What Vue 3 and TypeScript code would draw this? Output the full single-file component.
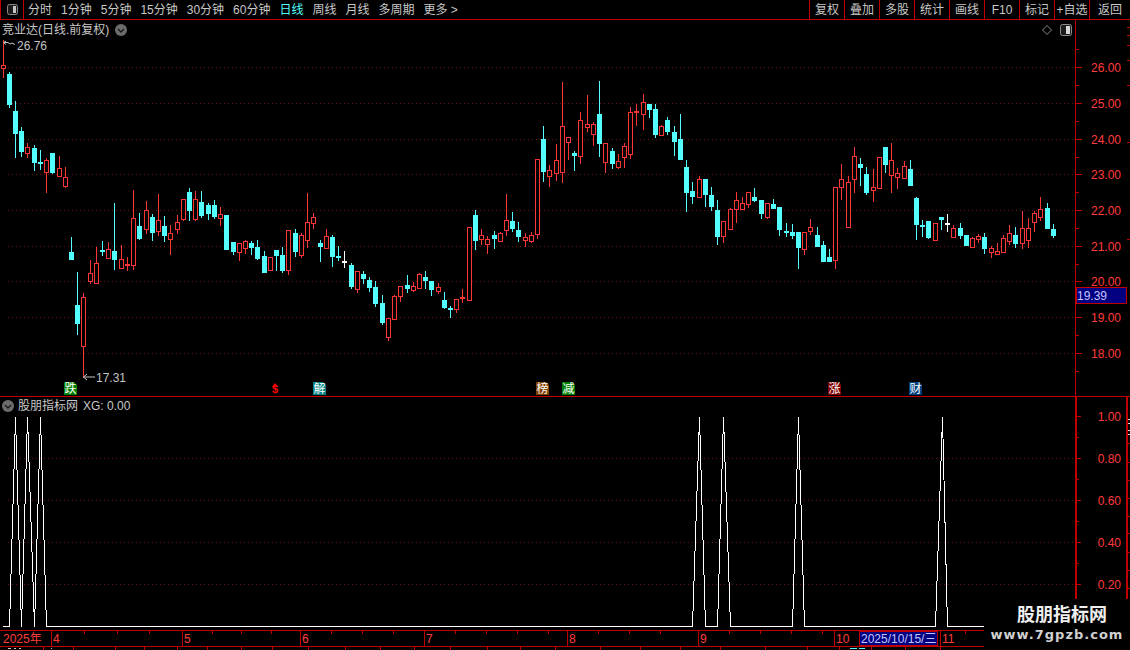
<script setup lang="ts">
type Candle = [number, number, number, number, number, number];

const RED = "#ff3636";
const CYAN = "#54ffff";
const WHITE = "#ffffff";

const tabs = ["分时", "1分钟", "5分钟", "15分钟", "30分钟", "60分钟", "日线", "周线", "月线", "多周期", "更多 >"];
const tools = ["复权", "叠加", "多股", "统计", "画线", "F10", "标记", "+自选", "返回"];

// x, high, bodyTop, bodyBottom, low, kind (0 up, 1 down, 2 flat) — in page pixels
const candles: Candle[] = [
  [3,40,65,68,77,0],[9,72,74,104,107,1],[15,101,111,133,157,1],[21,127,131,151,156,1],[27,143,147,153,157,0],
  [34,145,148,162,170,1],[40,150,162,163,169,1],[46,158,160,172,192,0],[52,153,153,172,173,1],[59,156,168,176,176,0],
  [65,167,177,186,187,0],[71,237,252,259,259,1],[77,272,305,323,334,1],[83,293,297,346,377,0],[90,260,273,281,283,0],
  [96,247,263,283,283,0],[102,241,250,251,255,1],[108,242,249,258,258,0],[114,203,251,259,269,1],[121,245,259,268,268,0],
  [127,257,264,265,270,0],[133,190,218,265,269,0],[139,213,226,238,239,1],[146,201,210,229,233,0],[152,214,217,232,240,1],
  [158,194,220,231,235,0],[164,216,226,235,241,1],[170,225,233,239,254,0],[177,215,222,229,233,0],[183,199,199,219,220,0],
  [189,188,192,210,220,1],[195,191,199,219,220,0],[201,191,202,215,217,1],[208,203,205,213,219,1],[214,200,205,216,218,1],
  [220,207,214,218,225,0],[226,215,215,249,249,1],[233,242,242,251,254,1],[239,243,243,252,260,0],[245,240,241,248,253,0],
  [251,241,243,247,254,1],[257,240,247,258,259,1],[264,251,256,272,272,1],[270,257,257,270,270,0],[276,250,250,255,270,1],
  [282,247,255,270,272,1],[288,230,230,270,274,0],[295,229,233,251,256,1],[301,233,235,255,257,0],[307,193,222,240,247,0],
  [313,213,217,223,228,0],[320,240,243,246,261,1],[326,229,236,248,248,0],[332,235,237,256,266,1],[338,246,256,257,260,1],
  [344,251,261,262,267,2],[351,263,265,286,288,1],[357,271,271,289,292,0],[363,271,274,278,283,1],[369,277,280,287,291,1],
  [375,281,287,303,306,1],[382,295,303,322,324,1],[388,318,318,337,340,0],[394,295,296,319,319,0],[400,286,286,296,301,0],
  [407,275,285,288,292,1],[413,282,286,290,291,0],[419,273,274,288,288,0],[425,271,277,280,288,1],[431,281,281,289,295,1],
  [438,283,287,291,293,0],[444,292,300,307,308,1],[450,306,308,309,317,1],[456,299,299,309,312,0],[462,289,297,298,302,0],
  [469,227,227,300,300,0],[475,210,215,240,249,1],[481,229,235,239,244,0],[487,236,239,244,253,0],[494,231,235,238,248,1],
  [500,232,233,241,241,0],[506,194,220,230,235,0],[512,212,221,228,231,1],[518,222,230,236,241,1],[525,233,237,240,246,0],
  [531,232,235,241,242,0],[537,159,159,234,238,0],[543,126,139,171,181,1],[549,165,170,176,186,0],[556,144,160,173,180,0],
  [562,82,126,172,182,0],[568,137,137,142,159,0],[574,151,153,155,170,1],[580,112,120,156,163,0],[587,95,124,127,131,0],
  [593,122,124,134,145,0],[599,81,114,143,156,1],[605,143,143,162,172,0],[612,148,151,163,168,1],[618,154,161,167,168,0],
  [624,143,146,157,167,0],[630,107,112,154,158,0],[636,104,111,112,125,0],[643,94,102,114,129,0],[649,104,104,109,117,1],
  [655,104,109,134,137,1],[661,125,126,135,135,0],[667,117,120,131,134,1],[674,126,132,141,155,1],[680,114,139,159,159,1],
  [686,160,167,192,211,1],[692,182,191,196,203,1],[699,176,179,197,197,0],[705,179,179,194,206,1],[711,187,195,206,210,1],
  [717,200,210,236,244,1],[723,221,221,236,242,0],[730,208,209,229,229,0],[736,192,200,209,222,0],[742,197,203,209,209,0],
  [748,192,192,204,207,0],[754,188,197,200,201,1],[761,200,200,213,218,1],[767,203,203,217,218,0],[773,199,204,208,208,1],
  [779,207,207,229,235,1],[786,223,231,232,236,1],[792,224,232,235,238,1],[798,232,232,247,268,1],[804,232,232,249,254,0],
  [810,219,227,231,234,0],[817,227,235,246,246,1],[823,241,245,261,261,1],[829,249,257,261,261,1],[835,187,187,260,268,0],
  [841,164,179,187,199,0],[848,176,182,227,227,0],[854,147,156,179,192,0],[860,158,164,167,185,1],[866,167,174,192,194,1],
  [873,169,187,190,201,0],[879,157,157,188,188,0],[885,147,147,164,172,1],[891,143,160,175,192,0],[897,168,173,177,188,0],
  [904,161,166,178,178,0],[910,160,169,185,185,1],[916,197,198,224,239,1],[922,220,225,226,236,1],[928,221,221,237,238,1],
  [935,223,223,240,240,0],[941,217,217,219,229,1],[947,214,223,224,231,2],[953,225,228,237,237,0],[960,223,228,235,238,1],
  [966,235,235,245,245,1],[972,237,238,247,247,0],[978,234,236,239,242,0],[984,233,237,248,253,1],[991,246,248,252,257,0],
  [997,243,251,254,254,0],[1003,235,238,252,252,0],[1009,225,233,241,244,0],[1015,227,235,243,247,1],[1022,211,228,243,248,0],
  [1028,218,228,240,247,0],[1034,211,213,222,231,0],[1040,197,209,217,220,0],[1047,203,208,228,228,1],[1053,224,229,235,237,1],
];

const shapes = candles.map(([x, h, t, b, l, k]) => ({
  x,
  h,
  t,
  b,
  l,
  color: k === 0 ? RED : k === 1 ? CYAN : WHITE,
  filled: k !== 0 || b - t <= 1,
}));

const priceGrid = [67, 103, 139, 174, 210, 246, 281, 317, 353];
const priceLabels = [
  { y: 67, t: "26.00" }, { y: 103, t: "25.00" }, { y: 139, t: "24.00" }, { y: 174, t: "23.00" }, { y: 210, t: "22.00" },
  { y: 246, t: "21.00" }, { y: 281, t: "20.00" }, { y: 317, t: "19.00" }, { y: 353, t: "18.00" },
];
const priceMinor = [49, 85, 121, 157, 192, 228, 264, 299, 335, 371];

const markers = [
  { x: 64, t: "跌", c: "#008000" }, { x: 313, t: "解", c: "#008080" }, { x: 536, t: "榜", c: "#804000" },
  { x: 562, t: "减", c: "#008000" }, { x: 828, t: "涨", c: "#800000" }, { x: 909, t: "财", c: "#004080" },
];

const subGrid = [458, 500, 542, 584];
const subLabels = [
  { y: 416, t: "1.00" }, { y: 458, t: "0.80" }, { y: 500, t: "0.60" }, { y: 542, t: "0.40" }, { y: 584, t: "0.20" },
];
const subMinor = [437, 479, 521, 563, 605];
const farRedTicks = [443, 462, 480, 498, 516, 533, 552, 570, 588];

const peaks: [number, number][] = [[9, 21], [21, 34], [34, 46], [692, 705], [717, 730], [792, 804], [935, 947]];
const peakTops = [15, 27, 40, 699, 723, 798, 942];
const signal = [
  "3,626.5",
  ...peaks.flatMap(([a, b], i) => [`${a + 0.5},626.5`, `${peakTops[i] + 0.5},417`, `${b + 0.5},626.5`]),
  "984,626.5",
].join(" ");

const months = [
  { x: 51, t: "4" }, { x: 182, t: "5" }, { x: 300, t: "6" }, { x: 424, t: "7" },
  { x: 567, t: "8" }, { x: 698, t: "9" }, { x: 834, t: "10" }, { x: 940, t: "11" },
];
const dayTicks = [84, 117, 149, 212, 241, 271, 331, 362, 393, 455, 486, 517, 548, 598, 629, 660, 729, 760, 791, 822, 862, 965];
const stripCells = [43, 73, 115, 144, 177, 207, 241, 272, 308, 345, 380, 414, 450, 487, 520, 555, 600, 640, 680, 720, 765, 807, 839, 871, 905, 940];
const stripMarks = [
  { x: 8, w: 3, c: "#c8c8c8" }, { x: 14, w: 2, c: "#c8c8c8" }, { x: 19, w: 2, c: "#c8c8c8" }, { x: 51, w: 1, c: "#c8c8c8" },
  { x: 850, w: 7, c: "#54ffff" }, { x: 859, w: 6, c: "#54ffff" },
];
</script>

<template>
  <div class="screen">
    <header class="toolbar">
      <div class="layout-cell">
        <svg width="13" height="13" viewBox="0 0 13 13">
          <rect x="1.5" y="1.5" width="10" height="10" rx="2" fill="#1c1c1c" stroke="#8a8a8a" />
          <rect x="7" y="3" width="3" height="7" fill="#c4c4c4" />
        </svg>
      </div>
      <nav class="tabs">
        <span v-for="(tab, i) in tabs" :key="tab" class="tab" :class="{ active: i === 6 }">{{ tab }}</span>
      </nav>
      <div class="tools">
        <span v-for="tool in tools" :key="tool" class="tool">{{ tool }}</span>
      </div>
    </header>

    <section class="pane main-pane">
      <svg class="chart" width="1130" height="376" viewBox="0 20 1130 376">
        <g stroke="#6a1010" stroke-dasharray="1 3">
          <line v-for="y in priceGrid" :key="y" x1="8" :y1="y + 0.5" x2="1075" :y2="y + 0.5" />
        </g>
        <g shape-rendering="crispEdges">
          <g v-for="c in shapes" :key="c.x">
            <line :x1="c.x + 0.5" :y1="c.h" :x2="c.x + 0.5" :y2="c.l + 1" :stroke="c.color" />
            <rect v-if="c.filled" :x="c.x - 2" :y="c.t" width="5" :height="Math.max(1, c.b - c.t + 1)" :fill="c.color" />
            <rect v-else :x="c.x - 1.5" :y="c.t + 0.5" width="4" :height="c.b - c.t" fill="#000" :stroke="c.color" />
          </g>
        </g>

        <path d="M6 41 L3.5 42.5 L6 44.5 M4 42.5 H8 L10 44 L12 43 L15 44.5" fill="none" stroke="#c4c4c4" />
        <text class="note" x="17" y="50">26.76</text>
        <path d="M87 374 L83.5 377 L87 380 M84 377 H95" fill="none" stroke="#c4c4c4" />
        <text class="note" x="96" y="382">17.31</text>

        <g v-for="m in markers" :key="m.t">
          <path :d="`M${m.x} 382 H${m.x + 10} L${m.x + 13} 385 V395 H${m.x} Z`" :fill="m.c" />
          <text class="tag" :x="m.x + 6.5" y="393">{{ m.t }}</text>
        </g>
        <text class="dollar" x="275" y="393">$</text>
        <path d="M275 383 L278 387 H272 Z" fill="#ff0000" />

        <path d="M1047 25.5 L1051.5 30 L1047 34.5 L1042.5 30 Z" fill="none" stroke="#8a8a8a" />
        <rect x="1060.5" y="24.5" width="11" height="11" rx="2" fill="#1c1c1c" stroke="#8a8a8a" />
        <rect x="1066" y="26" width="4" height="8" fill="#d8d8d8" />

        <line x1="1075.5" y1="20" x2="1075.5" y2="396" stroke="#c00000" />
        <g stroke="#c00000">
          <line v-for="l in priceLabels" :key="l.y" x1="1076" :y1="l.y + 0.5" x2="1082" :y2="l.y + 0.5" />
          <line v-for="y in priceMinor" :key="y" x1="1076" :y1="y + 0.5" x2="1079" :y2="y + 0.5" />
          <line v-for="y in [27, 35, 45, 60, 85, 142, 239]" :key="y" x1="1127" :y1="y + 0.5" x2="1130" :y2="y + 0.5" />
        </g>
        <text v-for="l in priceLabels" :key="l.t" class="axis-label" x="1121" :y="l.y + 5">{{ l.t }}</text>

        <rect x="1076.5" y="287.5" width="50" height="16" fill="#000080" stroke="#c00000" />
        <text class="last-price" x="1077" y="300">19.39</text>
      </svg>

      <div class="title main-title">
        <span>竞业达(日线.前复权)</span>
        <svg class="chev" width="12" height="12" viewBox="0 0 12 12">
          <circle cx="6" cy="6" r="6" fill="#6c6c6c" />
          <path d="M3 5 L6 8 L9 5" fill="none" stroke="#1a1a1a" stroke-width="1.4" />
        </svg>
      </div>
    </section>

    <section class="pane sub-pane">
      <svg class="chart" width="1130" height="233" viewBox="0 397 1130 233">
        <g stroke="#6a1010" stroke-dasharray="1 3">
          <line v-for="y in subGrid" :key="y" x1="8" :y1="y + 0.5" x2="1075" :y2="y + 0.5" />
        </g>
        <polyline :points="signal" fill="none" stroke="#ffffff" stroke-width="1" shape-rendering="crispEdges" />
        <rect x="1075" y="397" width="2" height="233" fill="#c00000" />
        <rect x="1126" y="397" width="2" height="203" fill="#c00000" />
        <g stroke="#c00000">
          <line v-for="l in subLabels" :key="l.y" x1="1077" :y1="l.y + 0.5" x2="1081" :y2="l.y + 0.5" />
          <line v-for="y in subMinor" :key="y" x1="1077" :y1="y + 0.5" x2="1079" :y2="y + 0.5" />
          <line v-for="y in farRedTicks" :key="y" x1="1128" :y1="y + 0.5" x2="1130" :y2="y + 0.5" />
        </g>
        <g stroke="#e0e0e0">
          <line v-for="y in [419, 423, 430, 434]" :key="y" x1="1128" :y1="y + 0.5" x2="1130" :y2="y + 0.5" />
        </g>
        <text v-for="l in subLabels" :key="l.t" class="axis-label" x="1121" :y="l.y + 5">{{ l.t }}</text>
      </svg>
      <div class="title sub-title">
        <svg class="chev" width="12" height="12" viewBox="0 0 12 12">
          <circle cx="6" cy="6" r="6" fill="#6c6c6c" />
          <path d="M3 5 L6 8 L9 5" fill="none" stroke="#1a1a1a" stroke-width="1.4" />
        </svg>
        <span>股朋指标网</span>
        <span class="value">XG: 0.00</span>
      </div>
    </section>

    <footer class="timeline">
      <svg class="chart" width="1130" height="17" viewBox="0 630 1130 17">
        <g stroke="#c00000">
          <line v-for="x in dayTicks" :key="x" :x1="x + 0.5" y1="631" :x2="x + 0.5" y2="634" />
          <line v-for="m in months" :key="m.x" :x1="m.x + 0.5" y1="631" :x2="m.x + 0.5" y2="646" />
        </g>
        <text class="month" x="3" y="643">2025年</text>
        <text v-for="m in months" :key="m.t" class="month" :x="m.x + 2" y="643">{{ m.t }}</text>
        <rect x="859.5" y="631.5" width="78" height="14" fill="#000080" stroke="#c00000" />
        <text class="date-tip" x="861" y="643">2025/10/15/三</text>
      </svg>
    </footer>

    <div class="strip">
      <span v-for="x in stripCells" :key="x" class="strip-cell" :style="{ left: x + 'px' }"></span>
      <span
        v-for="m in stripMarks"
        :key="m.x"
        class="strip-mark"
        :style="{ left: m.x + 'px', width: m.w + 'px', background: m.c }"
      ></span>
    </div>

    <aside class="watermark">
      <div class="wm-title">股朋指标网</div>
      <div class="wm-url">www.7gpzb.com</div>
    </aside>
  </div>
</template>

<style>
html, body { margin: 0; background: #000; }
</style>

<style scoped>
.screen {
  position: relative;
  width: 1130px;
  height: 650px;
  overflow: hidden;
  background: #000;
  display: flex;
  flex-direction: column;
  font-family: "Liberation Sans", "Noto Sans CJK SC", sans-serif;
  font-size: 12px;
  color: #c8c8c8;
}
.toolbar {
  height: 19px;
  flex: none;
  display: flex;
  align-items: stretch;
  border-bottom: 1px solid #c00000;
  line-height: 21px;
}
.layout-cell {
  width: 22px;
  flex: none;
  border-left: 1px solid #c00000;
  border-right: 1px solid #c00000;
  display: flex;
  align-items: center;
  justify-content: center;
}
.tabs { display: flex; gap: 9px; margin-left: 4px; }
.tab { white-space: nowrap; }
.tab.active { color: #54ffff; }
.tools { margin-left: auto; display: flex; }
.tool {
  width: 34px;
  border-left: 1px solid #c00000;
  text-align: center;
  white-space: nowrap;
}
.tool:last-child { width: 40px; }
.pane { position: relative; flex: none; }
.main-pane { height: 376px; border-bottom: 1px solid #c00000; }
.sub-pane { height: 233px; }
.chart { display: block; }
.title {
  position: absolute;
  display: flex;
  align-items: center;
  white-space: nowrap;
  line-height: 16px;
}
.main-title { left: 2px; top: 2px; gap: 6px; }
.sub-title { left: 2px; top: 1px; gap: 4px; }
.sub-title .value { margin-left: 1px; }
.chev { flex: none; }
.note { fill: #c4c4c4; font-size: 12px; }
.axis-label { fill: #ff3c3c; font-size: 12px; text-anchor: end; }
.last-price { fill: #c4c4ff; font-size: 12px; }
.tag { fill: #fff; font-size: 12px; text-anchor: middle; }
.dollar { fill: #ff0000; font-size: 11px; font-weight: 700; text-anchor: middle; }
.timeline {
  flex: none;
  height: 17px;
  border-bottom: 1px solid #c00000;
  border-top: 1px solid #c00000;
  box-sizing: border-box;
  overflow: hidden;
}
.timeline .chart { margin-top: -1px; }
.month { fill: #ff3c3c; font-size: 12px; }
.date-tip { fill: #c4c4ff; font-size: 12px; }
.strip { position: relative; height: 3px; flex: none; overflow: hidden; }
.strip-cell { position: absolute; top: 0; width: 1px; height: 3px; background: #c00000; }
.strip-mark { position: absolute; top: 1px; height: 1px; }
.watermark {
  position: absolute;
  left: 984px;
  top: 599px;
  width: 146px;
  height: 51px;
  background: #000;
  text-align: center;
}
.wm-title {
  margin-top: 4px;
  padding-left: 10px;
  font-family: "Noto Sans CJK SC", sans-serif;
  font-size: 18px;
  line-height: 20px;
  font-weight: 700;
  color: #eeeeee;
}
.wm-url {
  margin-top: 4px;
  font-family: "DejaVu Sans", sans-serif;
  font-size: 13px;
  line-height: 16px;
  font-weight: 700;
  letter-spacing: 1px;
  color: #d0d0d0;
}
</style>
